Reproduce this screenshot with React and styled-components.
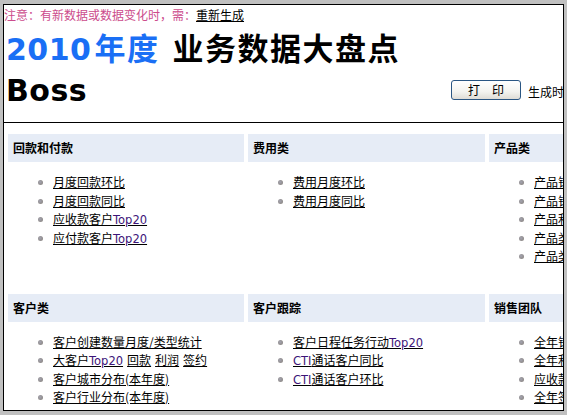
import React from "react";
import styled, { createGlobalStyle } from "styled-components";

const GlobalStyle = createGlobalStyle`
  html, body {
    margin: 0;
    padding: 0;
    background: #c0c0c0;
  }
  body {
    font-family: "Liberation Sans", "Noto Sans CJK SC", sans-serif;
    font-size: 12px;
    color: #000;
  }
`;

const boards = [
  {
    title: "回款和付款",
    items: [
      [{ text: "月度回款环比" }],
      [{ text: "月度回款同比" }],
      [{ text: "应收款客户", en: "Top20" }],
      [{ text: "应付款客户", en: "Top20" }],
    ],
  },
  {
    title: "费用类",
    items: [[{ text: "费用月度环比" }], [{ text: "费用月度同比" }]],
  },
  {
    title: "产品类",
    items: [
      [{ text: "产品销售环比" }],
      [{ text: "产品销售同比" }],
      [{ text: "产品利润排行" }],
      [{ text: "产品类别分布" }],
      [{ text: "产品类型分布" }],
    ],
  },
  {
    title: "客户类",
    items: [
      [{ text: "客户创建数量月度/类型统计" }],
      [
        { text: "大客户", en: "Top20" },
        { text: "回款" },
        { text: "利润" },
        { text: "签约" },
      ],
      [{ text: "客户城市分布(本年度)" }],
      [{ text: "客户行业分布(本年度)" }],
    ],
  },
  {
    title: "客户跟踪",
    items: [
      [{ text: "客户日程任务行动", en: "Top20" }],
      [{ pre: "CTI", text: "通话客户同比" }],
      [{ pre: "CTI", text: "通话客户环比" }],
    ],
  },
  {
    title: "销售团队",
    items: [
      [{ text: "全年销售统计" }],
      [{ text: "全年利润统计" }],
      [{ text: "应收款统计" }],
      [{ text: "全年签约统计" }],
      [{ text: "全年回款统计" }],
    ],
  },
];

const Frame = styled.div`
  margin: 4px 0 0 3px;
  width: 559px;
  height: 405px;
  border: 1px solid #000;
  background: #fff;
  overflow: hidden;
`;

const Notice = styled.div`
  padding-top: 3px;
  line-height: 16px;
  color: #cc4c8c;
  white-space: nowrap;

  a {
    color: #000;
    text-decoration: underline;
  }
`;

const Title = styled.h1`
  margin: 0;
  padding-left: 2px;
  height: 46px;
  line-height: 46px;
  font-family: "Noto Sans CJK SC", sans-serif;
  font-size: 31px;
  font-weight: bold;
  letter-spacing: 1.5px;
  white-space: nowrap;
`;

const Year = styled.span`
  color: #1a6ff5;
  margin-right: 13px;
`;

const Digits = styled.span`
  margin-right: 3px;
  font-family: "DejaVu Sans", sans-serif;
  font-size: 30px;
  letter-spacing: 0.5px;
`;

const BossRow = styled.div`
  display: flex;
  align-items: flex-start;
  height: 42px;
  margin-bottom: 10px;
  white-space: nowrap;
`;

const Boss = styled.div`
  flex: 0 0 445px;
  padding-left: 2px;
  line-height: 42px;
  font-family: "DejaVu Sans", sans-serif;
  font-size: 30px;
  font-weight: bold;
  letter-spacing: 0.5px;
`;

const PrintButton = styled.button`
  flex: none;
  margin-top: 10px;
  width: 70px;
  height: 20px;
  padding: 0;
  border: 1px solid #2a5683;
  border-radius: 3px;
  background: linear-gradient(#ffffff, #f3f3ef 60%, #dedcd6);
  font-family: "Noto Sans CJK SC", sans-serif;
  font-size: 12px;
  color: #000;
  line-height: 18px;
`;

const Stamp = styled.span`
  margin: 15px 0 0 7px;
  line-height: 14px;
  font-family: "Noto Sans CJK SC", sans-serif;
`;

const Rule = styled.hr`
  margin: 0;
  height: 0;
  border: 0;
  border-top: 1px solid #000;
`;

const Board = styled.div`
  display: grid;
  grid-template-columns: 236px 237px 237px;
  column-gap: 4px;
  row-gap: 28px;
  padding: 11px 0 0 4px;
`;

const Cell = styled.section``;

const CellHead = styled.h3`
  margin: 0;
  height: 28px;
  padding-left: 5px;
  background: #e6ecf6;
  font-family: "Noto Sans CJK SC", sans-serif;
  font-size: 12px;
  font-weight: bold;
  line-height: 28px;
`;

const LinkList = styled.ul`
  list-style: none;
  margin: 11px 0 0;
  padding: 0 0 0 45px;
  white-space: nowrap;
`;

const LinkItem = styled.li`
  position: relative;
  height: 18.5px;
  line-height: 18px;
  font-family: "Noto Sans CJK SC", sans-serif;

  &::before {
    content: "";
    position: absolute;
    left: -15px;
    top: 7px;
    width: 5px;
    height: 5px;
    border-radius: 50%;
    background: radial-gradient(circle at 40% 40%, #a4a4b0, #857f78);
  }
`;

const ReportLink = styled.a`
  color: #000;
  text-decoration: underline;
  margin-right: 4px;
`;

const Latin = styled.span`
  font-family: "DejaVu Sans", sans-serif;
  font-size: 11.5px;
  line-height: 1;
  color: #3c1478;
`;

const App = () => {
  return (
    <>
      <GlobalStyle />
      <Frame>
        <Notice>
          注意：有新数据或数据变化时，需：<a href="#">重新生成</a>
        </Notice>
        <Title>
          <Year>
            <Digits>2010</Digits>年度
          </Year>
          业务数据大盘点
        </Title>
        <BossRow>
          <Boss>Boss</Boss>
          <PrintButton>打　印</PrintButton>
          <Stamp>生成时间：2010-12-31 09:30:00</Stamp>
        </BossRow>
        <Rule />
        <Board>
          {boards.map((board) => (
            <Cell key={board.title}>
              <CellHead>{board.title}</CellHead>
              <LinkList>
                {board.items.map((links, i) => (
                  <LinkItem key={i}>
                    {links.map((link, j) => (
                      <ReportLink href="#" key={j}>
                        {link.pre && <Latin>{link.pre}</Latin>}
                        {link.text}
                        {link.en && <Latin>{link.en}</Latin>}
                      </ReportLink>
                    ))}
                  </LinkItem>
                ))}
              </LinkList>
            </Cell>
          ))}
        </Board>
      </Frame>
    </>
  );
};

export default App;
